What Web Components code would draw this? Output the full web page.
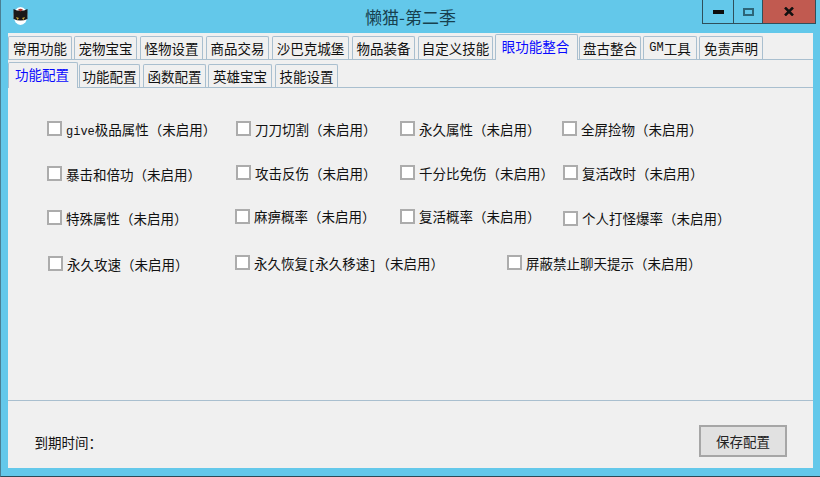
<!DOCTYPE html>
<html lang="zh-CN">
<head>
<meta charset="utf-8">
<title>懒猫-第二季</title>
<style>
  html, body { margin: 0; padding: 0; background: #63c8ea; }
  body { font: 13.5px "Noto Sans CJK SC", "Liberation Sans", sans-serif; color: #111; overflow: hidden; }
  .mono { font-family: "Liberation Mono", monospace; font-size: 11px; }
  .wide { font-family: "Liberation Mono", monospace; font-size: 12px; }
</style>
</head>
<body>

<win-frame caption="懒猫-第二季">
  <tab-strip level="1">
    <tab-item style="width:64px;margin-right:2px">常用功能</tab-item>
    <tab-item style="width:63px;margin-right:3px">宠物宝宝</tab-item>
    <tab-item style="width:63px;margin-right:3px">怪物设置</tab-item>
    <tab-item style="width:63px;margin-right:3px">商品交易</tab-item>
    <tab-item style="width:77px;margin-right:3px">沙巴克城堡</tab-item>
    <tab-item style="width:63px;margin-right:3px">物品装备</tab-item>
    <tab-item style="width:75px;margin-right:2px">自定义技能</tab-item>
    <tab-item active style="width:83px;margin-right:1px">眼功能整合</tab-item>
    <tab-item style="width:62px;margin-right:2px">盘古整合</tab-item>
    <tab-item style="width:54px;margin-right:2px"><span class="wide">GM</span>工具</tab-item>
    <tab-item style="width:64px">免责声明</tab-item>
  </tab-strip>
  <tab-strip level="2">
    <tab-item active style="width:70px;margin-right:1px">功能配置</tab-item>
    <tab-item style="width:61px;margin-right:3px">功能配置</tab-item>
    <tab-item style="width:63px;margin-right:2px">函数配置</tab-item>
    <tab-item style="width:64px;margin-right:3px">英雄宝宝</tab-item>
    <tab-item style="width:63px">技能设置</tab-item>
  </tab-strip>

  <option-panel>
    <option-row style="margin-top:33px">
      <check-item style="width:189px"><span class="wide">give</span>极品属性（未启用）</check-item>
      <check-item style="width:164px">刀刀切割（未启用）</check-item>
      <check-item style="width:162px">永久属性（未启用）</check-item>
      <check-item>全屏捡物（未启用）</check-item>
    </option-row>
    <option-row style="margin-top:29px">
      <check-item style="width:189px;margin-top:1px">暴击和倍功（未启用）</check-item>
      <check-item style="width:164px">攻击反伤（未启用）</check-item>
      <check-item style="width:163px">千分比免伤（未启用）</check-item>
      <check-item>复活改时（未启用）</check-item>
    </option-row>
    <option-row style="margin-top:28.500px">
      <check-item style="width:188px;margin-top:1.500px">特殊属性（未启用）</check-item>
      <check-item style="width:165px">麻痹概率（未启用）</check-item>
      <check-item style="width:163px">复活概率（未启用）</check-item>
      <check-item style="margin-top:2px">个人打怪爆率（未启用）</check-item>
    </option-row>
    <option-row style="margin-top:31.500px">
      <check-item style="width:187px;margin-left:1px;margin-top:1px">永久攻速（未启用）</check-item>
      <check-item style="width:272px">永久恢复<span class="wide">[</span>永久移速<span class="wide">]</span>（未启用）</check-item>
      <check-item>屏蔽禁止聊天提示（未启用）</check-item>
    </option-row>
  </option-panel>

  <foot-bar>
    <span slot="info">到期时间：</span>
    <push-button slot="action">保存配置</push-button>
  </foot-bar>
</win-frame>

<script>
//============= WINDOW FRAME =========================//
const frameTpl = document.createElement('template');
frameTpl.innerHTML = `
<style>
  :host { display: flex; flex-direction: column; width: 820px; height: 477px; box-sizing: border-box;
          border-left: 1px solid #4a7f93; border-bottom: 1px solid #2c4a56; }
  .bar { display: flex; height: 33px; flex: none; position: relative; }
  .cat { margin: 7px 0 0 12px; width: 15px; height: 18px; }
  .title { position: absolute; left: 364px; top: 5px; font-size: 17px; line-height: 23px; color: #17414f; white-space: nowrap; }
  .ctl { margin-left: auto; margin-right: 4px; display: flex; height: 24px; box-sizing: border-box;
         border: 1px solid #2f4f5b; border-top: 0; }
  .ctl div { display: flex; align-items: center; justify-content: center; box-sizing: border-box; }
  .min { width: 31px; border-right: 1px solid #2f4f5b; }
  .max { width: 29px; border-right: 1px solid #2f4f5b; }
  .close { width: 52px; background: #c15a50; }
  .client { flex: 1; margin: 0 7px 8px 7px; background: #f0f0f0; display: flex; flex-direction: column; min-height: 0; }
</style>
<div class="bar">
  <svg class="cat" viewBox="0 0 15 18">
    <ellipse cx="7.500" cy="9" rx="7" ry="9" fill="#fff"/>
    <path d="M0.500 2 L4 3.500 H11 L14.500 2 V12 Q7.500 15 0.500 12 Z" fill="#1b1818"/>
    <path d="M5 2.500 Q7.500 1 10 2.500 L7.500 4.500 Z" fill="#b5342c"/>
    <path d="M3 10 L6 11 L4.500 13 Z M12 10 L9 11 L10.500 13 Z" fill="#c9a437"/>
  </svg>
  <div class="title"></div>
  <div class="ctl">
    <div class="min"><svg width="11" height="4"><rect width="11" height="4" fill="#0c0c0c"/></svg></div>
    <div class="max"><svg width="11" height="8"><rect x="1" y="1" width="9" height="6" fill="none" stroke="#2d6578" stroke-width="2"/></svg></div>
    <div class="close"><svg width="10" height="9"><path d="M1 .5 L9 8.500 M9 .5 L1 8.500" stroke="#111" stroke-width="2.500"/></svg></div>
  </div>
</div>
<div class="client"><slot></slot></div>`;

class WinFrame extends HTMLElement {
  constructor() {
    super();
    this.attachShadow({ mode: 'open' });
    this.shadowRoot.appendChild(frameTpl.content.cloneNode(true));
    this.shadowRoot.querySelector('.title').textContent = this.getAttribute('caption');
  }
}
customElements.define('win-frame', WinFrame);

//============= TABS =========================//
const stripTpl = document.createElement('template');
stripTpl.innerHTML = `
<style>
  :host { display: flex; align-items: flex-end; flex: none; box-sizing: border-box;
          border-bottom: 1px solid #a9bfcf; }
  :host([level="1"]) { height: 27px; }
  :host([level="2"]) { height: 28px; }
</style>
<slot></slot>`;

class TabStrip extends HTMLElement {
  constructor() {
    super();
    this.attachShadow({ mode: 'open' });
    this.shadowRoot.appendChild(stripTpl.content.cloneNode(true));
  }
}
customElements.define('tab-strip', TabStrip);

const tabTpl = document.createElement('template');
tabTpl.innerHTML = `
<style>
  :host { display: flex; align-items: center; justify-content: center; box-sizing: border-box; height: 23px;
          white-space: nowrap; font-size: 13.500px; color: #111; background: #f0f0f0;
          border: 1px solid #a9bfcf; border-bottom: 0; border-radius: 2px 2px 0 0; }
  :host([active]) { height: 26px; margin-bottom: -1px; color: #0808ff; padding: 0 2px 3px 0; position: relative; }
</style>
<slot></slot>`;

class TabItem extends HTMLElement {
  constructor() {
    super();
    this.attachShadow({ mode: 'open' });
    this.shadowRoot.appendChild(tabTpl.content.cloneNode(true));
  }
}
customElements.define('tab-item', TabItem);

//============= OPTIONS =========================//
const panelTpl = document.createElement('template');
panelTpl.innerHTML = `
<style>
  :host { display: flex; flex-direction: column; flex: 1; padding-left: 39px; min-height: 0; }
</style>
<slot></slot>`;

class OptionPanel extends HTMLElement {
  constructor() {
    super();
    this.attachShadow({ mode: 'open' });
    this.shadowRoot.appendChild(panelTpl.content.cloneNode(true));
  }
}
customElements.define('option-panel', OptionPanel);

const rowTpl = document.createElement('template');
rowTpl.innerHTML = `
<style>
  :host { display: flex; align-items: flex-start; height: 15px; }
</style>
<slot></slot>`;

class OptionRow extends HTMLElement {
  constructor() {
    super();
    this.attachShadow({ mode: 'open' });
    this.shadowRoot.appendChild(rowTpl.content.cloneNode(true));
  }
}
customElements.define('option-row', OptionRow);

const checkTpl = document.createElement('template');
checkTpl.innerHTML = `
<style>
  :host { display: flex; align-items: center; gap: 4px; height: 15px; white-space: nowrap; font-size: 13.500px; flex: none; }
  .box { width: 15px; height: 15px; box-sizing: border-box; background: #fff; border: 2px solid #acacac; flex: none; }
</style>
<div class="box"></div><span><slot></slot></span>`;

class CheckItem extends HTMLElement {
  constructor() {
    super();
    this.attachShadow({ mode: 'open' });
    this.shadowRoot.appendChild(checkTpl.content.cloneNode(true));
  }
}
customElements.define('check-item', CheckItem);

//============= FOOTER =========================//
const footTpl = document.createElement('template');
footTpl.innerHTML = `
<style>
  :host { display: flex; flex: none; height: 68px; box-sizing: border-box; border-top: 1px solid #a9bfcf;
          padding: 24px 26px 0 26.500px; justify-content: space-between; align-items: flex-start; }
  .info { margin-top: 8px; font-size: 13.500px; line-height: 18px; }
</style>
<div class="info"><slot name="info"></slot></div>
<slot name="action"></slot>`;

class FootBar extends HTMLElement {
  constructor() {
    super();
    this.attachShadow({ mode: 'open' });
    this.shadowRoot.appendChild(footTpl.content.cloneNode(true));
  }
}
customElements.define('foot-bar', FootBar);

const btnTpl = document.createElement('template');
btnTpl.innerHTML = `
<style>
  :host { display: flex; align-items: center; justify-content: center; width: 88px; height: 32px; box-sizing: border-box;
          background: #e1e1e1; border: 2px solid #a6a6a6; font-size: 13.500px; color: #222; }
</style>
<slot></slot>`;

class PushButton extends HTMLElement {
  constructor() {
    super();
    this.attachShadow({ mode: 'open' });
    this.shadowRoot.appendChild(btnTpl.content.cloneNode(true));
  }
}
customElements.define('push-button', PushButton);
</script>
</body>
</html>
